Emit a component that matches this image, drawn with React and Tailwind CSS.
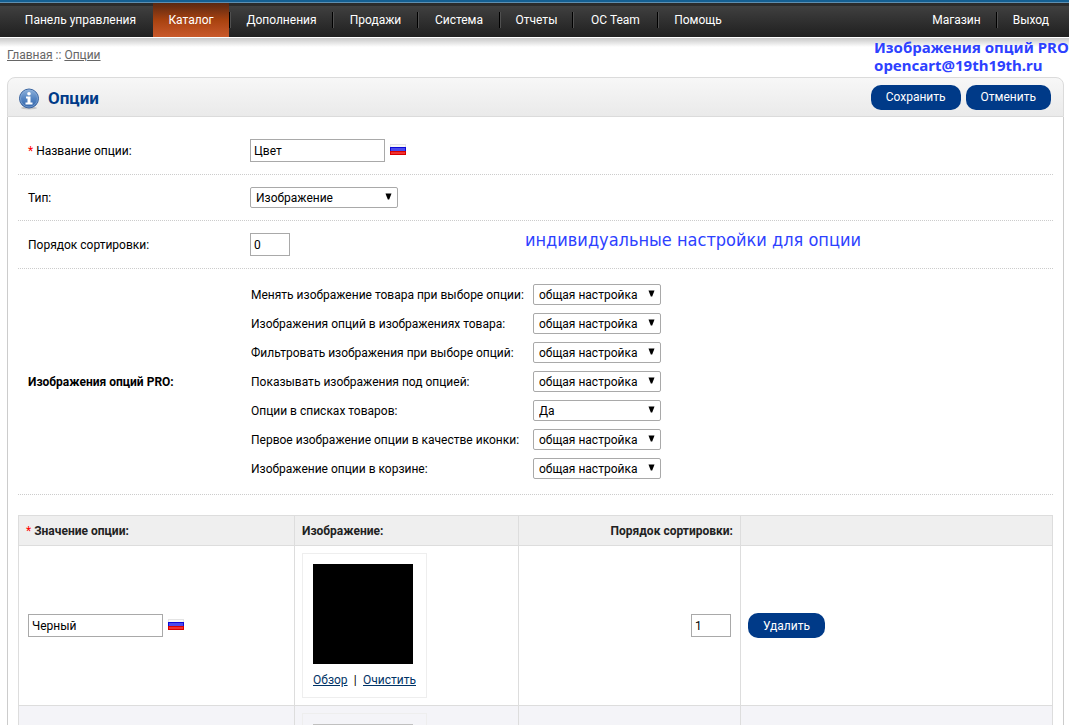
import { useState } from 'react';

const MENU = [
  { title: 'Панель управления', active: false, width: 'w-[145px]' },
  { title: 'Каталог', active: true, width: 'w-[76px]' },
  { title: 'Дополнения', active: false, width: 'w-[101px]' },
  { title: 'Продажи', active: false, width: 'w-[83px]' },
  { title: 'Система', active: false, width: 'w-[80px]' },
  { title: 'Отчеты', active: false, width: 'w-[71px]' },
  { title: 'OC Team', active: false, width: 'w-[83px]' },
  { title: 'Помощь', active: false, width: 'w-[78px]' },
];

const SETTINGS = [
  { id: 'change', label: 'Менять изображение товара при выборе опции:', value: 'common' },
  { id: 'product', label: 'Изображения опций в изображениях товара:', value: 'common' },
  { id: 'filter', label: 'Фильтровать изображения при выборе опций:', value: 'common' },
  { id: 'below', label: 'Показывать изображения под опцией:', value: 'common' },
  { id: 'lists', label: 'Опции в списках товаров:', value: 'yes' },
  { id: 'icon', label: 'Первое изображение опции в качестве иконки:', value: 'common' },
  { id: 'cart', label: 'Изображение опции в корзине:', value: 'common' },
];

const SETTING_OPTIONS = [
  { value: 'common', title: 'общая настройка' },
  { value: 'yes', title: 'Да' },
  { value: 'no', title: 'Нет' },
];

function Flag() {
  return (
    <svg className="shrink-0" width="16" height="13" viewBox="0 0 16 13" role="img" aria-label="Русский">
      <rect width="16" height="4" fill="#e4e4e4" />
      <rect x="1" y="1" width="14" height="2" fill="#f8f8f8" />
      <rect y="3" width="16" height="5" fill="#0a0ad8" />
      <rect x="1" y="4" width="14" height="3" fill="#4a4aee" />
      <rect y="7" width="16" height="4" fill="#d80000" />
      <rect x="1" y="8" width="14" height="2" fill="#f03030" />
    </svg>
  );
}

function InfoIcon() {
  return (
    <svg className="mt-[3px]" width="22" height="22" viewBox="0 0 22 22" aria-hidden="true">
      <defs>
        <linearGradient id="info" x1="0" y1="0" x2="0" y2="1">
          <stop offset="0" stopColor="#8fb3dc" />
          <stop offset="0.5" stopColor="#5585c2" />
          <stop offset="1" stopColor="#3465a8" />
        </linearGradient>
      </defs>
      <ellipse cx="11" cy="20" rx="8" ry="1.5" fill="#c4c4c4" />
      <circle cx="11" cy="10.5" r="9.5" fill="url(#info)" stroke="#39639f" />
      <circle cx="11" cy="10.5" r="8.5" fill="none" stroke="#8fb0da" strokeOpacity="0.6" />
      <circle cx="11" cy="5.8" r="1.8" fill="#fff" />
      <path d="M8 8.500h4.500v6H14.500v2h-7v-2h2v-4H8z" fill="#fff" />
    </svg>
  );
}

function Select({ id, label, options, value, onChange, className }) {
  return (
    <span className={`relative block ${className}`}>
      <select
        id={id}
        aria-label={label}
        value={value}
        onChange={e => onChange(e.target.value)}
        className="block h-[21px] w-full appearance-none rounded-[2px] border border-[#a9a9a9] bg-white pt-px pl-[5px] text-[12px] leading-[18px]"
      >
        {options.map(option => (
          <option key={option.value} value={option.value}>{option.title}</option>
        ))}
      </select>
      <svg className="pointer-events-none absolute top-[6px] right-[6px]" width="7" height="7" viewBox="0 0 7 7" aria-hidden="true">
        <path d="M0.500 0.500h6L4.200 6.500H2.800z" fill="#000" />
      </svg>
    </span>
  );
}

function TextInput({ className, ...props }) {
  return (
    <input
      type="text"
      className={`h-[23px] border border-[#a9a9a9] bg-white px-[3px] text-[12px] ${className}`}
      {...props}
    />
  );
}

function Button({ children }) {
  return (
    <button type="button" className="h-[25px] rounded-[10px] bg-[#003a88] px-[15px] text-[12px] text-white">
      {children}
    </button>
  );
}

function Divider() {
  return <span className="h-4 w-[2px] shrink-0 border-l border-black bg-[#505050]" />;
}

function FormRow({ label, htmlFor, required, bold, className, children }) {
  return (
    <div className={`flex items-center border-b border-dotted border-[#ccc] pl-[10px] ${className}`}>
      <label htmlFor={htmlFor} className={`w-[222px] shrink-0 ${bold ? 'font-bold' : ''}`}>
        {required && <span className="text-[#f00]">* </span>}
        {label}
      </label>
      {children}
    </div>
  );
}

function ImageBox({ color, children }) {
  return (
    <div className="h-[145px] w-[125px] border border-[#eee] p-[10px]">
      <div className={`h-[100px] w-[100px] ${color}`} />
      <div className="mt-2 flex justify-between whitespace-nowrap text-[#003366]">{children}</div>
    </div>
  );
}

export default function App() {
  const [type, setType] = useState('image');
  const [settings, setSettings] = useState(
    Object.fromEntries(SETTINGS.map(item => [item.id, item.value]))
  );

  return (
    <div className="relative h-screen overflow-hidden bg-white font-['Roboto','Liberation_Sans',sans-serif] text-[12px] leading-4 text-black">
      <div className="h-[3px] border-b border-[#5f8fb0] bg-[#145f92]" />

      {/* Main menu */}
      <nav className="flex h-[34px] border-t-3 border-[#2b2b2b] bg-linear-to-b from-[#404040] to-[#202020] pr-[5px] pl-2 text-white">
        {MENU.map((item, index) => (
          <div key={item.title} className="-mt-[3px] flex items-center">
            {index > 1 && <Divider />}
            <a
              href="#menu"
              className={`flex h-[34px] items-center justify-center whitespace-nowrap ${item.width} ${item.active ? 'bg-linear-to-b from-[#5a2811] via-[#a8420f] to-[#c9592a]' : ''}`}
            >
              {item.title}
            </a>
          </div>
        ))}
        <div className="-mt-[3px] ml-auto flex items-center">
          <a href="#store" className="px-[15px]">Магазин</a>
          <Divider />
          <a href="#logout" className="px-[15px]">Выход</a>
        </div>
      </nav>
      <div className="h-[10px] border-t border-white bg-linear-to-b from-[#c8c8c8] to-white" />

      <p className="absolute top-[38px] right-[2px] w-[193px] whitespace-nowrap font-['Noto_Sans',sans-serif] text-[15px] leading-[18px] font-bold text-[#2d41ff]">
        Изображения опций PRO
        <br />
        opencart@19th19th.ru
      </p>

      <div className="px-[7px] text-[#666]">
        <a href="#home" className="underline">Главная</a> :: <a href="#options" className="underline">Опции</a>
      </div>

      <main className="mt-[14px] mr-[5px] ml-[7px]">
        <header className="flex h-10 items-center gap-2 rounded-t-[8px] border border-[#dbdbdb] bg-linear-to-b from-[#f7f7f7] to-[#eaeaea] pr-3 pl-[10px]">
          <InfoIcon />
          <h1 className="mt-[2px] text-[17px] font-bold text-[#003a88]">Опции</h1>
          <div className="ml-auto flex gap-[5px]">
            <Button>Сохранить</Button>
            <Button>Отменить</Button>
          </div>
        </header>

        <div className="border-x border-[#ccc] p-[10px]">
          <form className="relative">
            <FormRow label="Название опции:" htmlFor="name" required className="h-12">
              <TextInput id="name" defaultValue="Цвет" className="mr-[5px] w-[135px]" />
              <Flag />
            </FormRow>
            <FormRow label="Тип:" htmlFor="type" className="h-[46px]">
              <Select
                id="type"
                options={[{ value: 'image', title: 'Изображение' }, { value: 'select', title: 'Список' }]}
                value={type}
                onChange={setType}
                className="w-[148px]"
              />
            </FormRow>
            <FormRow label="Порядок сортировки:" htmlFor="sort" className="h-12">
              <TextInput id="sort" defaultValue="0" className="w-10" />
            </FormRow>
            <p className="absolute top-[103px] left-[507px] whitespace-nowrap font-['DejaVu_Sans_Condensed','DejaVu_Sans',sans-serif] text-[18px] leading-5 text-[#2d41ff]">
              индивидуальные настройки для опции
            </p>
            <FormRow label="Изображения опций PRO:" bold className="h-[226px]">
              <div className="flex flex-col gap-2">
                {SETTINGS.map(item => (
                  <div key={item.id} className="flex items-center">
                    <label htmlFor={item.id} className="w-[283px] pl-px">{item.label}</label>
                    <Select
                      id={item.id}
                      options={SETTING_OPTIONS}
                      value={settings[item.id]}
                      onChange={value => setSettings({ ...settings, [item.id]: value })}
                      className="w-[128px]"
                    />
                  </div>
                ))}
              </div>
            </FormRow>
          </form>

          {/* Option values */}
          <table className="mt-5 w-full table-fixed border-collapse [&_td]:border [&_td]:border-[#ddd] [&_td]:p-[7px] [&_th]:border [&_th]:border-[#ddd] [&_th]:px-[7px]">
            <colgroup>
              <col className="w-[276px]" />
              <col className="w-[224px]" />
              <col className="w-[222px]" />
              <col />
            </colgroup>
            <thead>
              <tr className="h-[30px] bg-[#efefef] text-left text-[#222]">
                <th><span className="font-normal text-[#f00]">* </span>Значение опции:</th>
                <th>Изображение:</th>
                <th className="text-right">Порядок сортировки:</th>
                <th />
              </tr>
            </thead>
            <tbody>
              <tr>
                <td>
                  <div className="flex items-center gap-[5px] pl-[2px]">
                    <TextInput aria-label="Значение опции" defaultValue="Черный" className="w-[135px]" />
                    <Flag />
                  </div>
                </td>
                <td>
                  <ImageBox color="bg-black">
                    <a href="#browse" className="underline">Обзор</a>
                    <span className="text-black">|</span>
                    <a href="#clear" className="underline">Очистить</a>
                  </ImageBox>
                </td>
                <td className="text-right">
                  <TextInput aria-label="Порядок сортировки" defaultValue="1" className="mr-[2px] w-10" />
                </td>
                <td><Button>Удалить</Button></td>
              </tr>
              <tr className="bg-[#f4f4f8]">
                <td />
                <td><ImageBox color="bg-[#c0c0c0]" /></td>
                <td />
                <td />
              </tr>
            </tbody>
          </table>
        </div>
      </main>
    </div>
  );
}
